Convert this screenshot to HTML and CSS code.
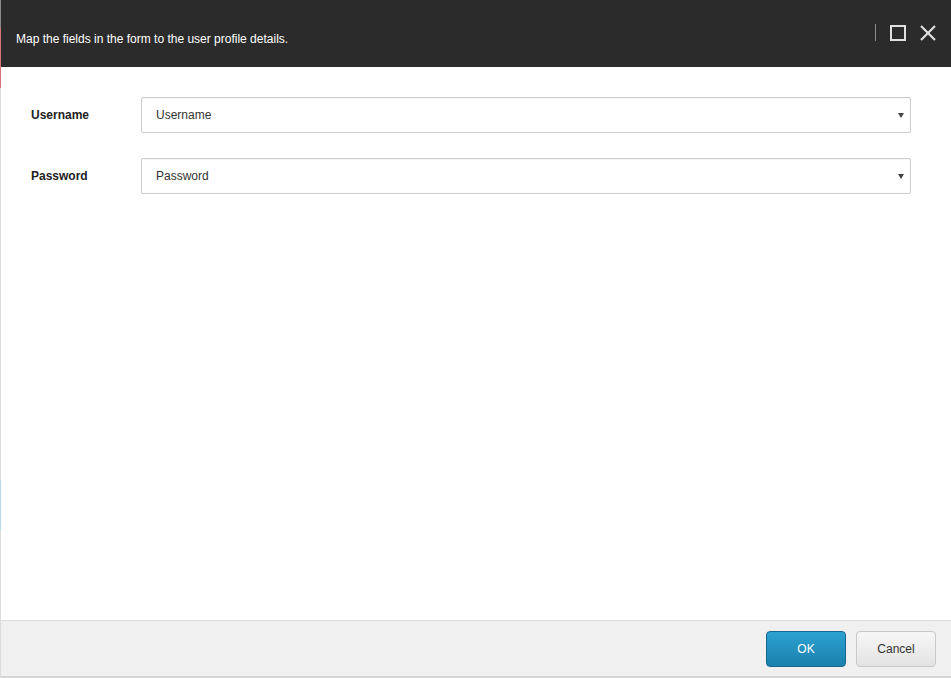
FILE: index.html
```html
<!DOCTYPE html>
<html lang="en">
<head>
    <meta charset="UTF-8">
    <title>Map fields</title>
    <link rel="stylesheet" href="styles.css">
</head>
<body>
    <div class="dialog">
        <div class="header">
            <span class="title">Map the fields in the form to the user profile details.</span>
            <div class="controls">
                <span class="sep"></span>
                <svg class="icon" width="16" height="16" viewBox="0 0 16 16">
                    <rect x="1" y="1" width="14" height="14" fill="none" stroke="#e0e0e0" stroke-width="2"/>
                </svg>
                <svg class="icon" width="18" height="18" viewBox="0 0 18 18">
                    <path d="M2 2 L16 16 M16 2 L2 16" stroke="#e0e0e0" stroke-width="2.2" fill="none"/>
                </svg>
            </div>
        </div>
        <div class="content">
            <div class="row">
                <label class="label">Username</label>
                <div class="select">Username<span class="arrow"></span></div>
            </div>
            <div class="row">
                <label class="label">Password</label>
                <div class="select">Password<span class="arrow"></span></div>
            </div>
        </div>
        <div class="footer">
            <button class="btn ok">OK</button>
            <button class="btn cancel">Cancel</button>
        </div>
    </div>
</body>
</html>
```

FILE: styles.css
```css
html, body {
    margin: 0;
    height: 678px;
    overflow: hidden;
}
body {
    font-family: "Liberation Sans", Arial, sans-serif;
    font-size: 12px;
    background: linear-gradient(to bottom, #8a8a8a 0, #8a8a8a 28px, #d9737a 28px, #d9737a 88px, #dcdcdc 88px, #dcdcdc 480px, #b8dbe6 480px, #b8dbe6 530px, #dcdcdc 530px);
}
.dialog {
    margin-left: 1px;
    height: 676px;
    display: flex;
    flex-direction: column;
    background: #fff;
    border-bottom: 2px solid #d6d6d6;
}
.header {
    height: 67px;
    flex: none;
    background: #2b2b2b;
    color: #fff;
    display: flex;
    align-items: center;
    padding: 0 14px 0 15px;
}
.title {
    flex: 1;
    padding-top: 11px;
}
.controls {
    display: flex;
    align-items: center;
    margin-top: -2px;
}
.sep {
    width: 1px;
    height: 17px;
    background: #8a8a8a;
    margin-right: 14px;
}
.icon {
    display: block;
}
.icon + .icon {
    margin-left: 13px;
}
.content {
    flex: 1;
    padding: 30px 40px 0 30px;
    display: flex;
    flex-direction: column;
    gap: 25px;
}
.row {
    display: flex;
    align-items: center;
}
.label {
    width: 110px;
    font-weight: bold;
    color: #222;
}
.select {
    flex: 1;
    height: 34px;
    border: 1px solid #ccc;
    border-radius: 2px;
    box-shadow: inset 0 1px 1px rgba(0,0,0,0.04);
    display: flex;
    align-items: center;
    padding: 0 0 0 14px;
    color: #333;
    position: relative;
}
.arrow {
    position: absolute;
    right: 6px;
    top: 15px;
    border-left: 3px solid transparent;
    border-right: 3px solid transparent;
    border-top: 5px solid #444;
}
.footer {
    height: 55px;
    flex: none;
    background: #f0f0f0;
    border-top: 1px solid #dedede;
    display: flex;
    align-items: center;
    justify-content: flex-end;
    gap: 10px;
    padding: 0 15px 0 0;
}
.btn {
    width: 80px;
    height: 36px;
    border-radius: 4px;
    font-family: inherit;
    font-size: 12px;
    cursor: pointer;
}
.ok {
    background: linear-gradient(to bottom, #2da2d1, #1b80ae);
    border: 1px solid #19668c;
    color: #fff;
}
.cancel {
    background: linear-gradient(to bottom, #f7f7f7, #e3e3e3);
    border: 1px solid #c9c9c9;
    color: #333;
}
```
